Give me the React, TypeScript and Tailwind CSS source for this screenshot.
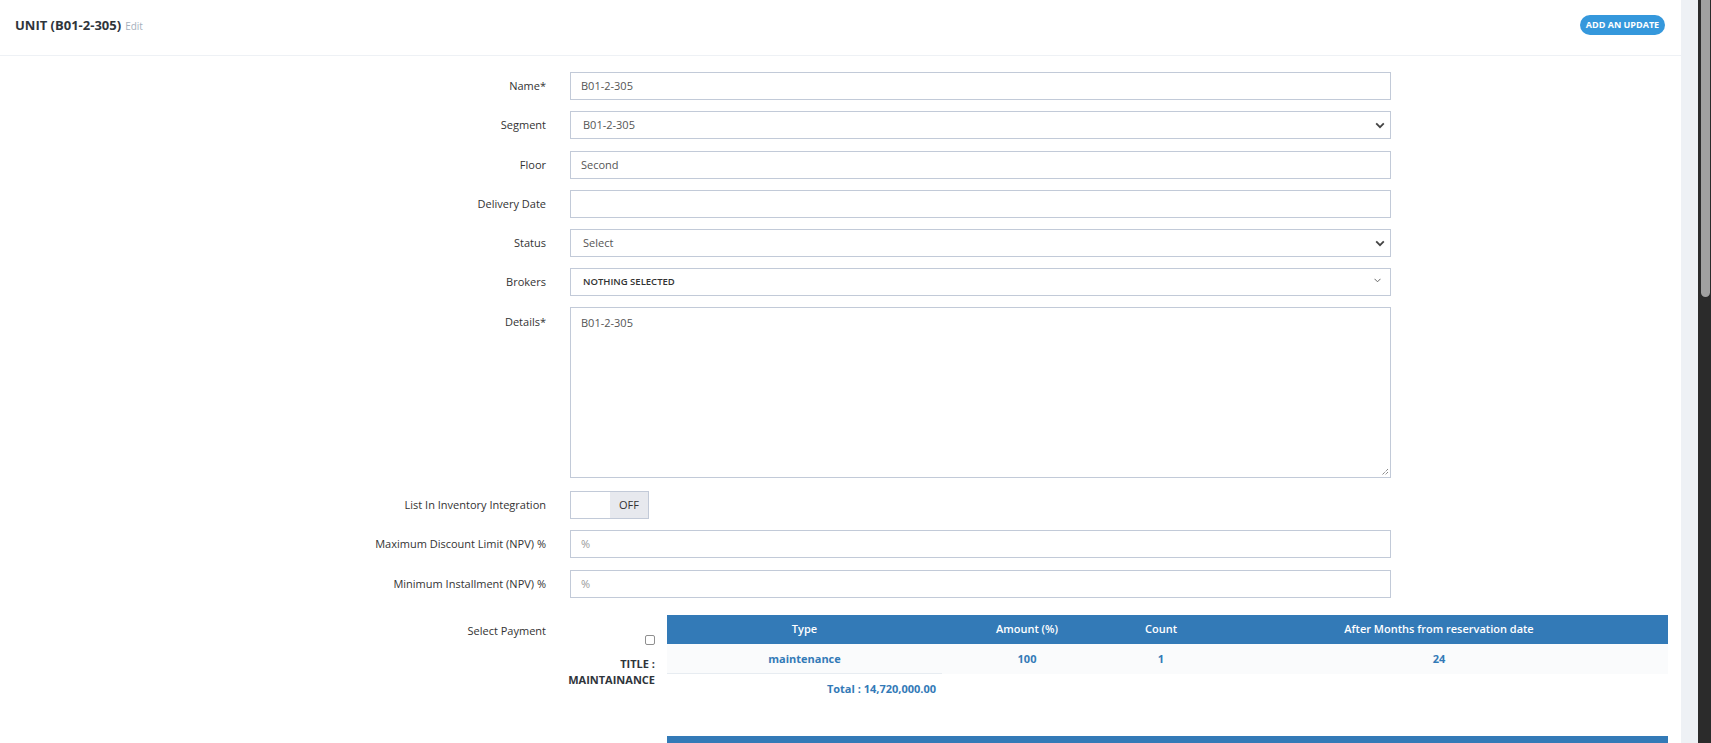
import React from "react";

type RowProps = {
	label: string;
	children: React.ReactNode;
	className?: string;
	labelClass?: string;
};

const box = "w-[821px] border border-[#c2cad8] bg-white text-[11px] text-[#555]";

function Row({ label, children, className, labelClass }: RowProps) {
	return (
		<div className={`flex items-start ${className ?? ""}`}>
			<label className={`w-[546px] shrink-0 text-right text-[11px] text-[#333] ${labelClass ?? "leading-[28px]"}`}>
				{label}
			</label>
			<div className="ml-[24px]">{children}</div>
		</div>
	);
}

function SelectBox({ value }: { value: string }) {
	return (
		<div className={`${box} flex h-[28px] items-center justify-between pl-[12px] pr-[5px]`}>
			<span>{value}</span>
			<svg width="10" height="7" viewBox="0 0 10 7" fill="none">
				<path d="M1.2 1.4l3.8 3.8 3.8-3.8" stroke="#444" strokeWidth="1.8" />
			</svg>
		</div>
	);
}

const cols = "grid grid-cols-[275px_170px_98px_458px]";

function PaymentTable() {
	return (
		<div className="w-[1001px]">
			<div className={`${cols} h-[29px] items-center bg-[#337ab7] text-center text-[11px] font-semibold text-white`}>
				<span>Type</span>
				<span>Amount (%)</span>
				<span>Count</span>
				<span>After Months from reservation date</span>
			</div>
			<div className={`${cols} h-[30px] bg-[#fafbfc] text-center text-[11px] font-bold text-[#337ab7]`}>
				<span className="border-b border-[#e7ecf1] leading-[29px]">maintenance</span>
				<span className="leading-[29px]">100</span>
				<span className="leading-[29px]">1</span>
				<span className="leading-[29px]">24</span>
			</div>
			<div className={`${cols} h-[30px] text-[11px] font-bold text-[#337ab7]`}>
				<span className="pr-[6px] text-right leading-[30px]">Total : 14,720,000.00</span>
			</div>
		</div>
	);
}

export default function App() {
	return (
		<div className="flex h-[743px] w-full overflow-hidden bg-white font-['Open_Sans',sans-serif] text-[#333]">
			<div className="flex min-w-0 flex-1 flex-col">
				<div className="flex h-[56px] shrink-0 items-start justify-between border-b border-[#eef1f5] pl-[15px] pr-[16px] pt-[15px]">
					<div className="flex items-baseline gap-[4px] leading-[20px]">
						<span className="text-[13px] font-bold text-[#2f353b]">UNIT (B01-2-305)</span>
						<span className="text-[10px] text-[#a6b0bd]">Edit</span>
					</div>
					<button className="h-[20px] w-[85px] rounded-full bg-[#3598dc] text-[9px] font-bold text-white">
						ADD AN UPDATE
					</button>
				</div>

				<div className="flex flex-col pt-[16px]">
					<Row label="Name*">
						<div className={`${box} flex h-[28px] items-center pl-[10px]`}>B01-2-305</div>
					</Row>
					<Row label="Segment" className="mt-[11px]">
						<SelectBox value="B01-2-305" />
					</Row>
					<Row label="Floor" className="mt-[12px]">
						<div className={`${box} flex h-[28px] items-center pl-[10px]`}>Second</div>
					</Row>
					<Row label="Delivery Date" className="mt-[11px]">
						<div className={`${box} h-[28px]`} />
					</Row>
					<Row label="Status" className="mt-[11px]">
						<SelectBox value="Select" />
					</Row>
					<Row label="Brokers" className="mt-[11px]">
						<div className={`${box} flex h-[28px] items-center justify-between pl-[12px] pr-[9px]`}>
							<span className="text-[9.5px] font-semibold text-[#333]">NOTHING SELECTED</span>
							<svg width="7" height="5" viewBox="0 0 7 5" fill="none" className="-mt-[3px]">
								<path d="M0.5 0.8l3 3 3-3" stroke="#666" strokeWidth="1" />
							</svg>
						</div>
					</Row>
					<Row label="Details*" className="mt-[11px]" labelClass="pt-[7px] leading-[16px]">
						<div className={`${box} relative h-[171px] pl-[10px] pt-[7px] leading-[16px]`}>
							B01-2-305
							<svg width="8" height="8" viewBox="0 0 8 8" className="absolute bottom-[1px] right-[1px]">
								<path d="M7 1L1 7M7 4L4 7" stroke="#555" strokeWidth="1" strokeDasharray="1 1" />
							</svg>
						</div>
					</Row>
					<Row label="List In Inventory Integration" className="mt-[13px]">
						<div className="flex h-[28px] w-[79px] border border-[#c2cad8] text-[11px]">
							<div className="w-[39px] bg-white" />
							<div className="flex flex-1 items-center justify-center bg-[#e7e9ee] text-[#333]">OFF</div>
						</div>
					</Row>
					<Row label="Maximum Discount Limit (NPV) %" className="mt-[11px]">
						<div className={`${box} flex h-[28px] items-center pl-[10px] text-[#999]`}>%</div>
					</Row>
					<Row label="Minimum Installment (NPV) %" className="mt-[12px]">
						<div className={`${box} flex h-[28px] items-center pl-[10px] text-[#999]`}>%</div>
					</Row>

					<div className="mt-[17px] flex items-start">
						<div className="w-[546px] shrink-0 pt-[8px] text-right text-[11px] leading-[16px] text-[#333]">
							Select Payment
						</div>
						<div className="ml-[21px] flex w-[88px] shrink-0 flex-col items-end pt-[20px]">
							<div className="h-[10px] w-[10px] rounded-[2px] border border-[#8f8f8f] bg-white" />
							<div className="mt-[11px] text-right text-[11px] font-bold leading-[16px] text-[#2f353b]">
								<div>TITLE :</div>
								<div>MAINTAINANCE</div>
							</div>
						</div>
						<div className="ml-[12px] flex flex-col gap-[32px]">
							<PaymentTable />
							<div className="h-[29px] w-[1001px] bg-[#337ab7]" />
						</div>
					</div>
				</div>
			</div>
			<div className="w-[17px] shrink-0 bg-[#eef1f5]" />
			<div className="w-[13px] shrink-0 bg-[#2b2b2b] pl-[3px]">
				<div className="h-[297px] w-[9px] rounded-b-full bg-[#a0a0a0]" />
			</div>
		</div>
	);
}
